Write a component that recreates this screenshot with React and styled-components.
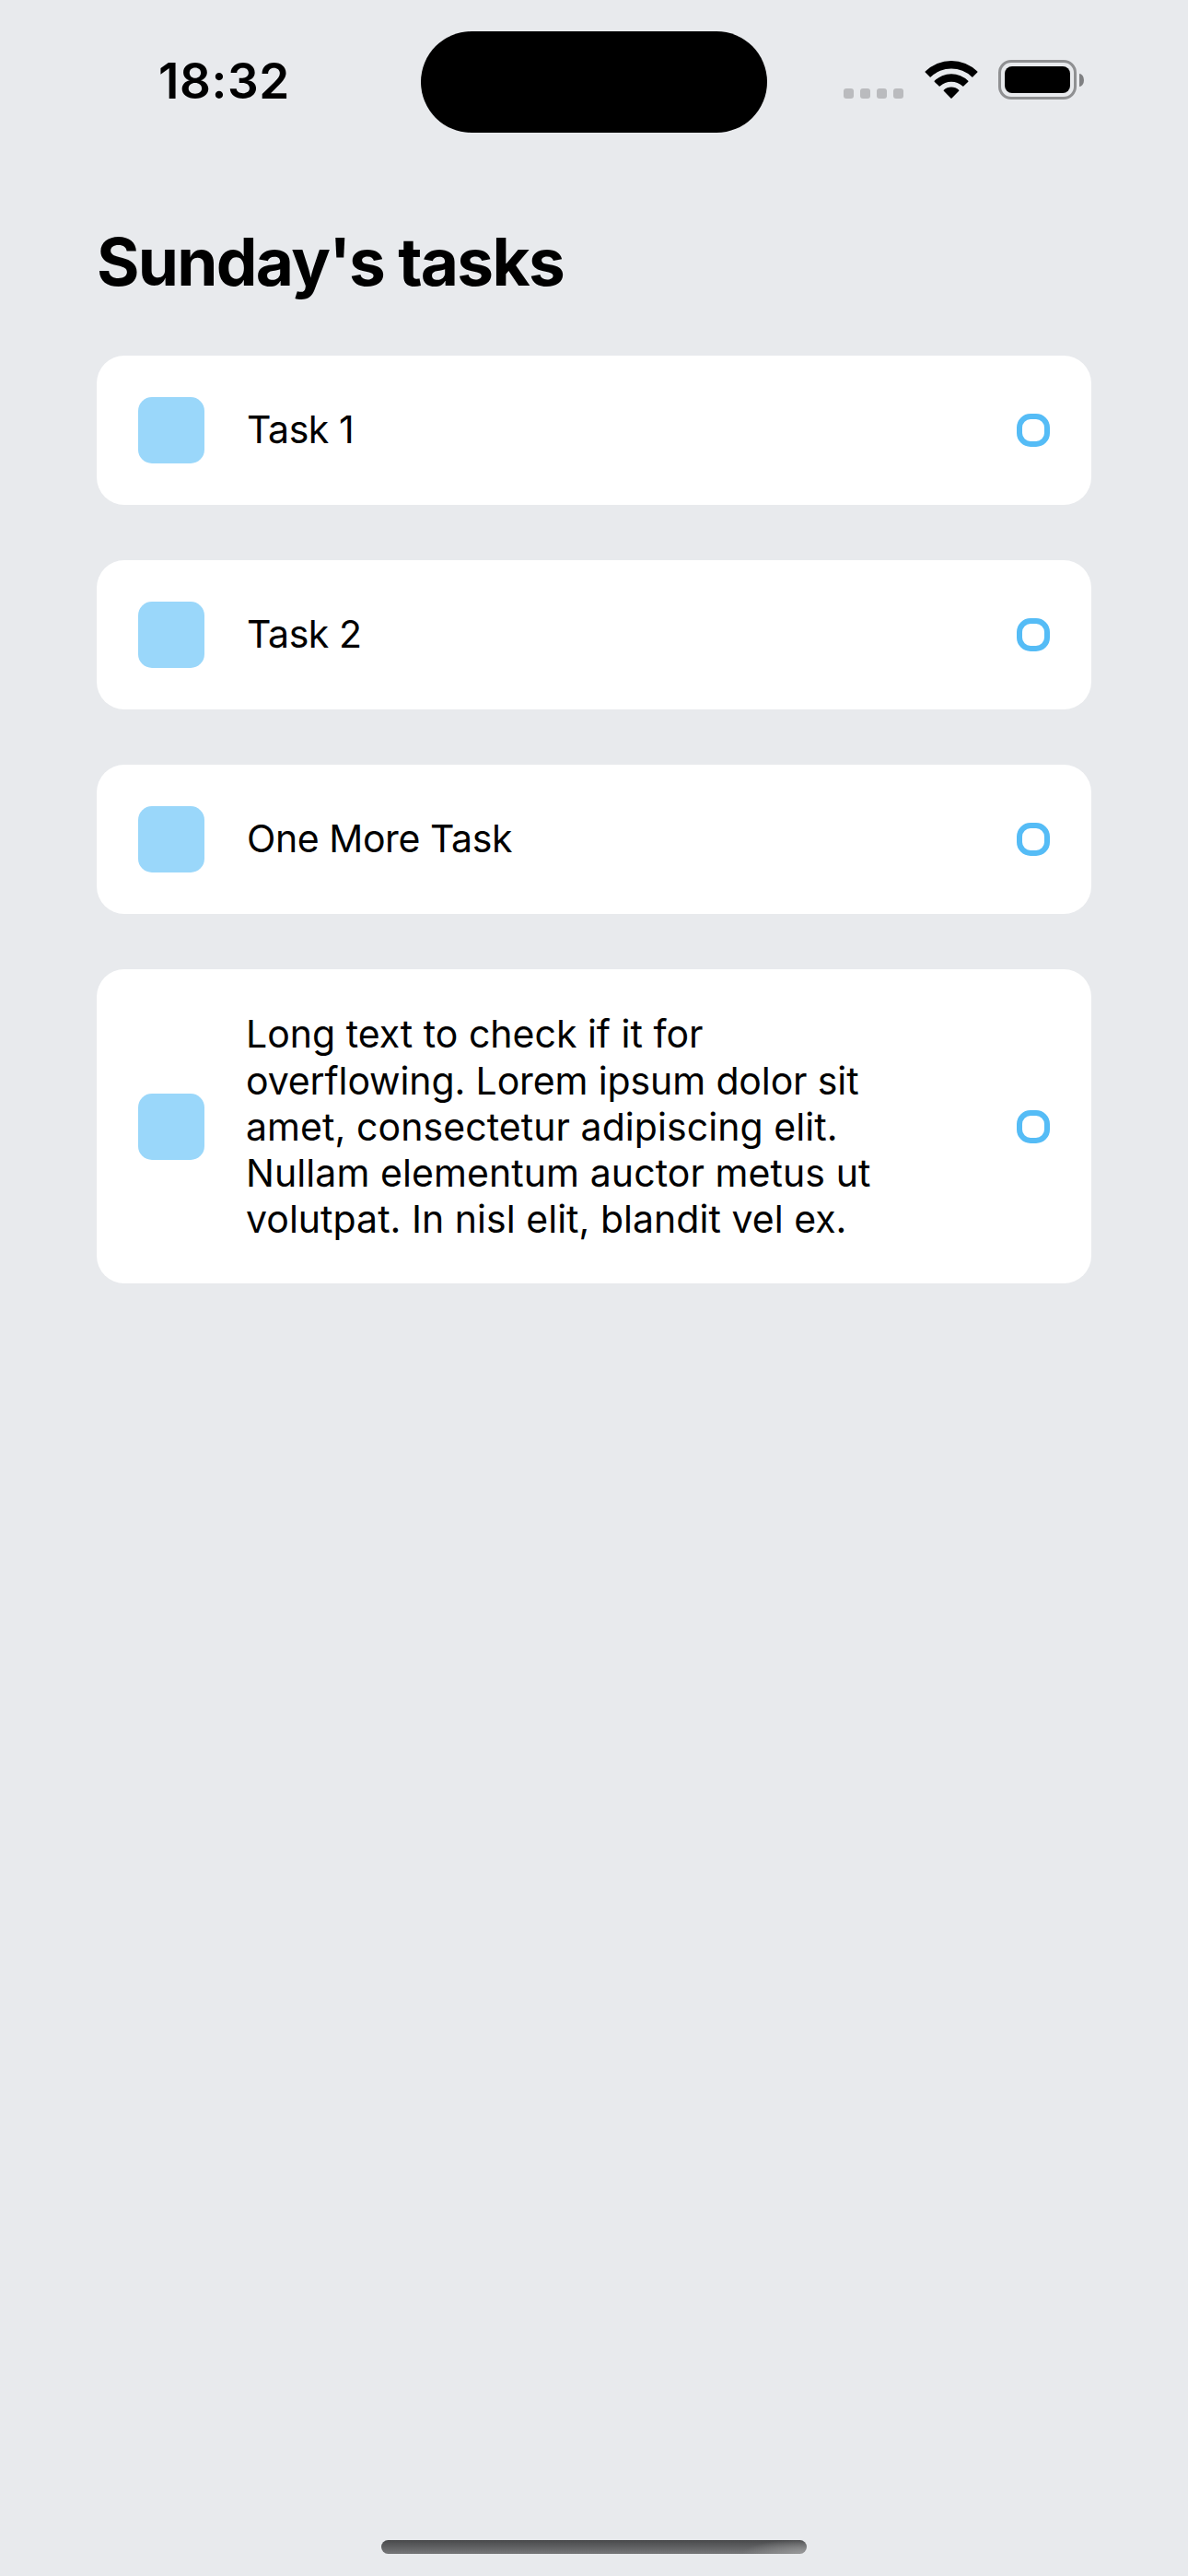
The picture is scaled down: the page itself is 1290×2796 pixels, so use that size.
import React from 'react';
import styled, { createGlobalStyle } from 'styled-components';

const GlobalStyle = createGlobalStyle`
  *, *::before, *::after { box-sizing: border-box; }
  body { margin: 0; background: #e8eaed; }
`;

const Screen = styled.div`
  display: flex;
  flex-direction: column;
  width: 1290px;
  height: 2796px;
  background: #e8eaed;
  color: #000;
  font-family: Inter, "Liberation Sans", sans-serif;
`;

const StatusBar = styled.header`
  display: grid;
  grid-template-columns: 457px 376px 457px;
  height: 177px;
`;

const Clock = styled.time`
  padding: 56px 0 0 172px;
  font-size: 53px;
  line-height: 64px;
  font-weight: 600;
  letter-spacing: 0.6px;
`;

const Island = styled.div`
  height: 110px;
  margin-top: 34px;
  border-radius: 55px;
  background: #000;
`;

const StatusIcons = styled.div`
  display: flex;
  align-items: flex-start;
  padding: 65px 0 0 83px;
`;

const Cellular = styled.div`
  display: flex;
  gap: 7px;
  margin: 31px 22.5px 0 0;
`;

const CellularDot = styled.span`
  width: 11px;
  height: 11px;
  border-radius: 3px;
  background: #babbbe;
`;

const WifiIcon = styled.svg`
  width: 58px;
  height: 43px;
  margin-right: 22.5px;
`;

const Battery = styled.div`
  display: flex;
  align-items: center;
  gap: 3px;
`;

const BatteryShell = styled.div`
  width: 85px;
  height: 43px;
  padding: 4px;
  border: 3px solid #8f9092;
  border-radius: 14px;
`;

const BatteryLevel = styled.div`
  height: 29px;
  border-radius: 8px;
  background: #000;
`;

const BatteryTip = styled.div`
  width: 5px;
  height: 14px;
  border-radius: 0 5px 5px 0 / 0 7px 7px 0;
  background: #7f8082;
`;

const Main = styled.main`
  flex: 1;
  padding: 64px 105px 0;
`;

const Title = styled.h1`
  margin: 0 0 59px;
  font-size: 71px;
  line-height: 86px;
  font-weight: 700;
  letter-spacing: -1.7px;
`;

const TaskList = styled.ul`
  display: flex;
  flex-direction: column;
  gap: 60px;
  margin: 0;
  padding: 0;
  list-style: none;
`;

const TaskCard = styled.li`
  display: flex;
  align-items: center;
  padding: 45px;
  border-radius: 30px;
  background: #fff;
`;

const Swatch = styled.span`
  flex: none;
  width: 72px;
  height: 72px;
  margin-right: 45px;
  border-radius: 15px;
  background: #9ad7fa;
`;

const TaskText = styled.p`
  width: 710px;
  margin: 0;
  font-size: 41px;
  line-height: 50px;
`;

const TaskLine = styled.span`
  display: block;
  letter-spacing: ${({ $tracking }) => $tracking}px;
  white-space: nowrap;

  &:only-child {
    padding: 0 0 2px 1px;
  }

  &:first-child:not(:only-child) {
    margin-bottom: 1px;
  }
`;

const Ring = styled.span`
  flex: none;
  width: 36px;
  height: 36px;
  margin-left: auto;
  border: 6px solid #55bcf6;
  border-radius: 15px;
`;

const HomeIndicator = styled.div`
  width: 462px;
  height: 15px;
  margin: 0 auto 24px;
  border-radius: 8px;
  background:
    radial-gradient(ellipse 70px 16px at 100% 100%, #9a9b9c, transparent),
    linear-gradient(#48494b, #767779);
`;

const tasks = [
  [{ text: 'Task 1', tracking: -0.42 }],
  [{ text: 'Task 2', tracking: -0.42 }],
  [{ text: 'One More Task', tracking: -0.42 }],
  [
    { text: 'Long text to check if it for', tracking: 0 },
    { text: 'overflowing. Lorem ipsum dolor sit', tracking: -0.12 },
    { text: 'amet, consectetur adipiscing elit.', tracking: 0.07 },
    { text: 'Nullam elementum auctor metus ut', tracking: 0.08 },
    { text: 'volutpat. In nisl elit, blandit vel ex.', tracking: 0.03 },
  ],
];

function Wifi() {
  return (
    <WifiIcon viewBox="0 0 58 43" aria-label="Wi-Fi">
      <path d="M0.7 12.6A40.3 40.3 0 0 1 57.3 12.6Q57.7 13.1 57.3 13.6L52.3 18.5Q51.8 18.9 51.3 18.4A32.2 32.2 0 0 0 6.7 18.4Q6.2 18.9 5.7 18.5L0.7 13.6Q0.3 13.1 0.7 12.6Z" />
      <path d="M10.7 22.7A26 26 0 0 1 47.3 22.7Q47.7 23.2 47.3 23.7L42.3 28.6Q41.8 29 41.3 28.5A18 18 0 0 0 16.7 28.5Q16.2 29 15.7 28.6L10.7 23.7Q10.3 23.2 10.7 22.7Z" />
      <path d="M20.8 32.8A12 12 0 0 1 37.2 32.8Q37.7 33.3 37.2 33.8L29.6 41.6Q29 42.2 28.4 41.6L20.8 33.8Q20.3 33.3 20.8 32.8Z" />
    </WifiIcon>
  );
}

export default function App() {
  return (
    <Screen>
      <GlobalStyle />
      <StatusBar>
        <Clock>18:32</Clock>
        <Island />
        <StatusIcons>
          <Cellular>
            <CellularDot />
            <CellularDot />
            <CellularDot />
            <CellularDot />
          </Cellular>
          <Wifi />
          <Battery>
            <BatteryShell>
              <BatteryLevel />
            </BatteryShell>
            <BatteryTip />
          </Battery>
        </StatusIcons>
      </StatusBar>
      <Main>
        <Title>Sunday's tasks</Title>
        <TaskList>
          {tasks.map((lines) => (
            <TaskCard key={lines[0].text}>
              <Swatch />
              <TaskText>
                {lines.map(({ text, tracking }) => (
                  <TaskLine key={text} $tracking={tracking}>
                    {text}{' '}
                  </TaskLine>
                ))}
              </TaskText>
              <Ring />
            </TaskCard>
          ))}
        </TaskList>
      </Main>
      <HomeIndicator />
    </Screen>
  );
}
